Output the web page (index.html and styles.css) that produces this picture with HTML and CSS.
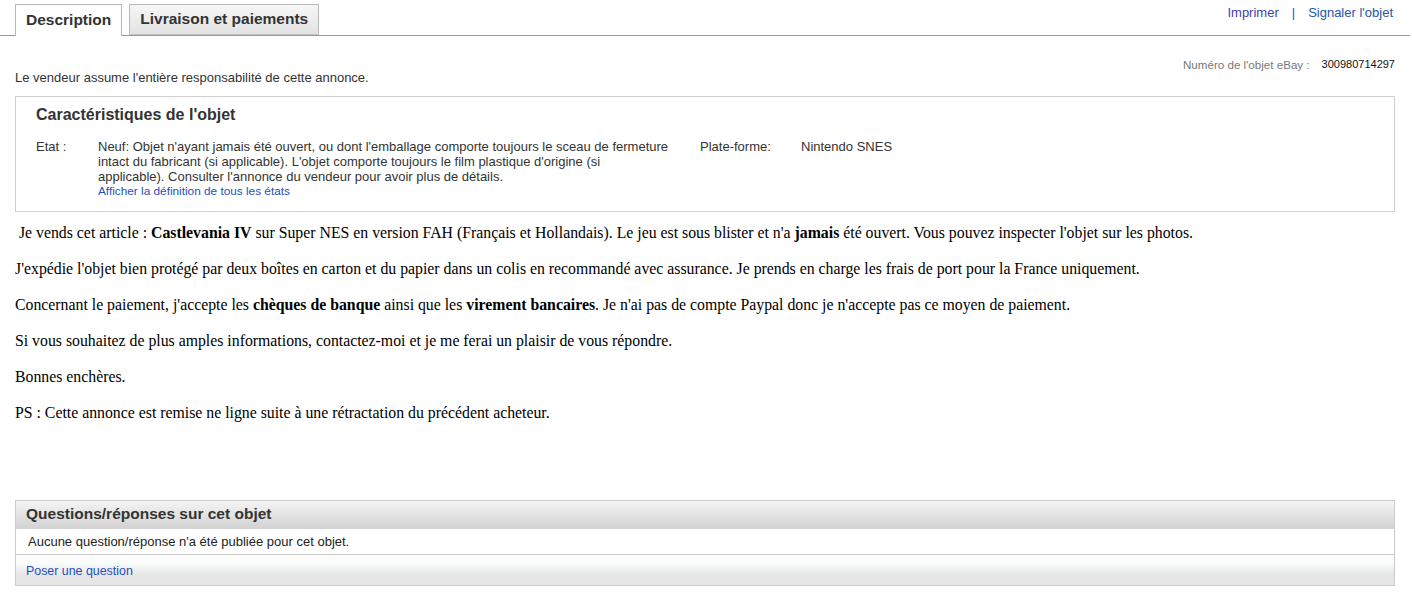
FILE: index.html
```html
<!DOCTYPE html>
<html lang="fr">
<head>
<meta charset="utf-8">
<title>Description</title>
<link rel="stylesheet" href="styles.css">
</head>
<body>
<div class="tabbar">
  <div class="tab tab-active">Description</div>
  <div class="tab tab-inactive">Livraison et paiements</div>
  <div class="toplinks">
    <a class="lnk-print" href="#">Imprimer</a>
    <span class="sep">|</span>
    <a class="lnk-report" href="#">Signaler l'objet</a>
  </div>
</div>

<div class="content">
  <div class="itemnum"><span class="itemnum-label">Numéro de l'objet eBay :</span><span class="itemnum-value">300980714297</span></div>
  <div class="seller-note">Le vendeur assume l'entière responsabilité de cette annonce.</div>

  <div class="specs">
    <h2 class="specs-title">Caractéristiques de l'objet</h2>
    <div class="specs-grid">
      <div class="spec-label">Etat :</div>
      <div class="spec-value spec-long">Neuf: Objet n'ayant jamais été ouvert, ou dont l'emballage comporte toujours le sceau de fermeture intact du fabricant (si applicable). L'objet comporte toujours le film plastique d'origine (si<br>applicable). Consulter l'annonce du vendeur pour avoir plus de détails.
        <a class="small-link" href="#">Afficher la définition de tous les états</a></div>
      <div class="spec-label spec-label2">Plate-forme:</div>
      <div class="spec-value">Nintendo SNES</div>
    </div>
  </div>

  <div class="desc">
    <p>&nbsp;Je vends cet article : <b>Castlevania IV</b> sur Super NES en version FAH (Français et Hollandais). Le jeu est sous blister et n'a <b>jamais</b> été ouvert. Vous pouvez inspecter l'objet sur les photos.</p>
    <p>J'expédie l'objet bien protégé par deux boîtes en carton et du papier dans un colis en recommandé avec assurance. Je prends en charge les frais de port pour la France uniquement.</p>
    <p>Concernant le paiement, j'accepte les <b>chèques de banque</b> ainsi que les <b>virement bancaires</b>. Je n'ai pas de compte Paypal donc je n'accepte pas ce moyen de paiement.</p>
    <p>Si vous souhaitez de plus amples informations, contactez-moi et je me ferai un plaisir de vous répondre.</p>
    <p>Bonnes enchères.</p>
    <p>PS : Cette annonce est remise ne ligne suite à une rétractation du précédent acheteur.</p>
  </div>

  <div class="qa">
    <div class="qa-head">Questions/réponses sur cet objet</div>
    <div class="qa-body">Aucune question/réponse n'a été publiée pour cet objet.</div>
    <div class="qa-foot"><a href="#">Poser une question</a></div>
  </div>
</div>
</body>
</html>
```

FILE: styles.css
```css
html, body {
  margin: 0;
  padding: 0;
  background: #fff;
}
body {
  font-family: "Liberation Sans", Arial, sans-serif;
  font-size: 13px;
  color: #333;
}
a { text-decoration: none; }

.tabbar {
  display: flex;
  align-items: flex-end;
  height: 35px;
  margin-right: 2px;
  padding-left: 15px;
  border-bottom: 1px solid #9a9a9a;
}
.tab {
  box-sizing: border-box;
  font-family: "Liberation Sans", Arial, sans-serif;
  font-weight: bold;
  font-size: 15.5px;
  color: #333;
  border: 1px solid #b8b8b8;
  border-bottom: none;
  display: flex;
  align-items: center;
}
.tab-active {
  height: 32px;
  margin-bottom: -1px;
  padding: 0 10px 2px 10px;
  background: #fff;
}
.tab-inactive {
  height: 31px;
  margin-left: 7px;
  padding: 0 10px 2px 10px;
  background: linear-gradient(#f7f7f7, #e2e2e2);
  border-bottom: 1px solid #c4c4c4;
}
.toplinks {
  margin-left: auto;
  align-self: flex-start;
  padding-top: 5px;
  padding-right: 17px;
  font-size: 13px;
  display: flex;
  gap: 13px;
}
.lnk-print { color: #3f3fa8; }
.lnk-report { color: #2355b0; }
.sep { color: #2355b0; }

.content {
  padding: 0 17px 0 15px;
}
.itemnum {
  margin-top: 22px;
  height: 13px;
  display: flex;
  justify-content: flex-end;
  align-items: center;
  font-size: 11px;
  line-height: 13px;
}
.itemnum-label { color: #777; margin-right: 12px; font-size: 11.6px; }
.itemnum-value { color: #111; }
.seller-note {
  line-height: 14px;
  color: #333;
}

.specs {
  margin-top: 11px;
  border: 1px solid #cfcfcf;
  padding: 9px 20px 12px 20px;
}
.specs-title {
  margin: 0;
  font-family: "Liberation Sans", Arial, sans-serif;
  font-size: 16px;
  line-height: 18px;
  font-weight: bold;
  color: #333;
}
.specs-grid {
  margin-top: 15px;
  display: grid;
  grid-template-columns: 62px 602px 101px auto;
  line-height: 15px;
  font-size: 13px;
  color: #333;
}
.spec-long { padding-right: 28px; }
.spec-label2 { padding-left: 0; }
.small-link {
  display: block;
  font-size: 11.8px;
  color: #1f4fc4;
}

.desc {
  font-family: "Liberation Serif", "Times New Roman", serif;
  font-size: 15.8px;
  color: #000;
  margin-top: 12px;
}
.desc p {
  margin: 0 0 18px 0;
  line-height: 18px;
}

.qa {
  margin-top: 78px;
  border: 1px solid #cbcbcb;
}
.qa-head {
  height: 28px;
  box-sizing: border-box;
  padding: 4px 10px 0 10px;
  font-weight: bold;
  font-size: 15.5px;
  color: #333;
  background: linear-gradient(#f4f4f4, #d2d2d2);
}
.qa-body {
  height: 26px;
  box-sizing: border-box;
  padding: 5px 12px 0 12px;
  border-bottom: 1px solid #cbcbcb;
  color: #222;
}
.qa-foot {
  height: 30px;
  box-sizing: border-box;
  padding: 9px 10px 0 10px;
  font-size: 12.4px;
  background: linear-gradient(#fdfdfd 0%, #fbfcfc 25%, #e6e6e6 65%, #e6e6e6 100%);
}
.qa-foot a { color: #1f4fc4; }
```
